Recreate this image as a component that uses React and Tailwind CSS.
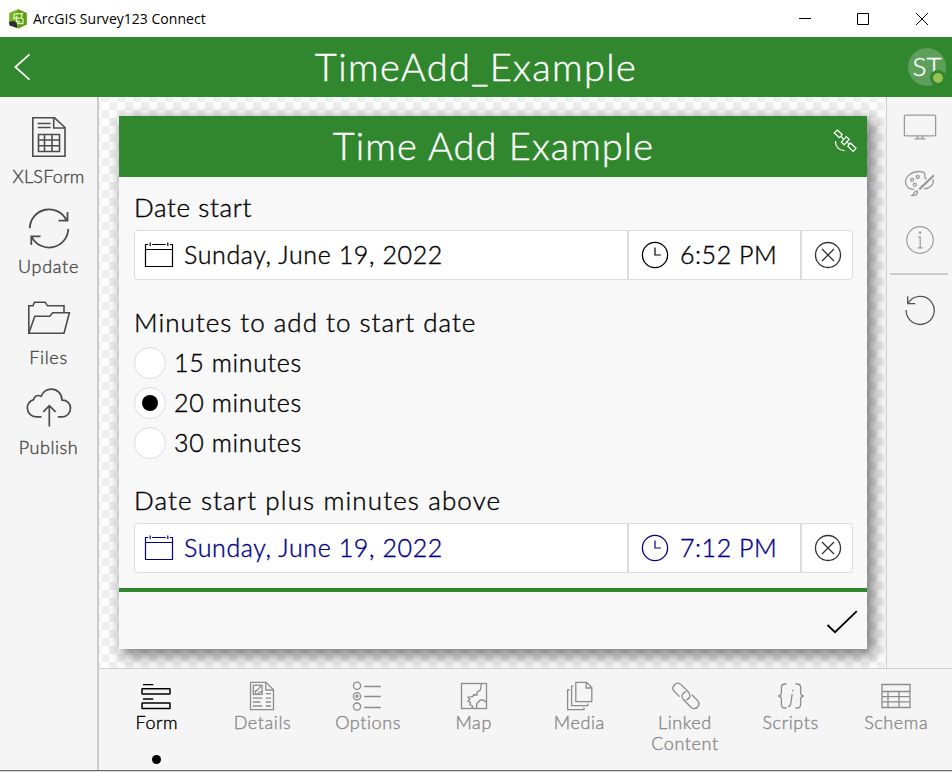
import { useState } from "react";

function XlsFormIcon() {
  return (
    <svg width="34" height="40" fill="none" stroke="currentColor" strokeWidth="1.6" className="mb-[2px]">
      <path d="M.8.8H22.5L33 10.5V39.2H.8Z" />
      <path d="M21.7.8V11H33M5.7 6.5H18.7M5.7 10.5H18.7" />
      <path d="M6.5 17.5H27.5V34.5H6.5ZM12.5 17.5V34.5M20 17.5V34.5M6.5 23H27.5M6.5 28.8H27.5" />
    </svg>
  );
}

function UpdateIcon() {
  return (
    <svg width="42" height="42" fill="none" stroke="currentColor" strokeWidth="1.8" className="mt-[2px]">
      <path d="M1.8 20.3A19.3 19.3 0 0 1 38.6 12.5M39.5 4V12.6H30.5" />
      <path d="M40.3 21A19.3 19.3 0 0 1 3.6 28.6M3.3 37V28.4H12.5" />
    </svg>
  );
}

function FilesIcon() {
  return (
    <svg width="44" height="34" fill="none" stroke="currentColor" strokeWidth="1.6">
      <path d="M1.8 32.2V4.8H6L7.4 1.2H18.2L20.4 4.8H37V12" />
      <path d="M1.8 32.2L7.8 15.2H22.8L25.6 11.8H42.4L37 32.2Z" />
    </svg>
  );
}

function PublishIcon() {
  return (
    <svg width="46" height="40" fill="none" stroke="currentColor" strokeWidth="1.7">
      <path d="M15.5 28.8H10.5A9 9 0 0 1 1.3 20C1.3 16 4 13 7.6 11.6C8 8.4 11.5 6.4 15.2 8.2C17.2 3.5 21 1.2 25.3 1.2C31.6 1.2 36 6 36 12.2C41 12 44.5 15.6 44.5 20C44.5 25 41 28.8 36.5 28.8H31.8" />
      <path d="M23.3 38.5V17.5M17.3 23.8L23.3 17.6L29.6 23.8" />
    </svg>
  );
}

function MonitorIcon() {
  return (
    <svg width="34" height="26" fill="none" stroke="currentColor" strokeWidth="1.3">
      <rect x="1.4" y="1.2" width="31.2" height="20.6" rx="1" />
      <path d="M14.5 22V24.6M19.5 22V24.6M11.5 24.8H22.5" />
    </svg>
  );
}

function PaletteIcon() {
  return (
    <svg width="32" height="28" fill="none" stroke="currentColor" strokeWidth="1.3">
      <path d="M10.2 19.3C5 19.5 1.5 16.5 1.5 12C1.5 6 8 1.5 15 1.5C19 1.5 21 2.6 20.8 5C20.6 7 20.8 8 22.2 9.3M29.2 9.5C30.5 14 26 18.5 20 18.8" />
      <circle cx="8.2" cy="9.8" r="1.5" />
      <circle cx="13.7" cy="7" r="1.5" />
      <circle cx="10.8" cy="14.8" r="1.5" />
      <path d="M15.2 19.4L30 5.2" strokeWidth="2.2" />
      <path d="M13 20.8C10 20.8 10 24.5 8 25.4C11 26.2 14.5 24.6 13 20.8Z" />
    </svg>
  );
}

function InfoIcon() {
  return (
    <svg width="30" height="30" fill="none" stroke="currentColor" strokeWidth="1.2">
      <circle cx="15" cy="15" r="13.3" />
      <path d="M12.8 12H15.2V22.8M12.8 22.8H17.6" />
      <circle cx="15" cy="7.6" r="1" fill="currentColor" strokeWidth=".6" />
    </svg>
  );
}

function UndoIcon() {
  return (
    <svg width="32" height="32" fill="none" stroke="currentColor" strokeWidth="1.3">
      <path d="M2.2 16A14 14 0 1 0 4.2 9.2M3.7 2.2V9.6H11.2" />
    </svg>
  );
}

function SatelliteIcon() {
  return (
    <svg width="24" height="24" fill="none" stroke="currentColor" strokeWidth="1.2">
      <path d="M4.3 1L9.2 5.6L6.4 8.6L1.2 4ZM17.5 14L23 19.3L20.2 22.4L14.8 17.2Z" />
      <path d="M13.3 7.6L16.2 10.2L11.2 15.8L8.4 13.2ZM7.8 7.3L10.4 10M14.2 13.2L16.2 15.4" />
      <path d="M2.4 12C2.4 17.6 6 21.5 11.5 21.6" />
    </svg>
  );
}

function CalendarIcon() {
  return (
    <svg width="30" height="26" fill="none" stroke="currentColor" strokeWidth="1.2">
      <path d="M4.2 2.5H1.5V24.5H28.5V2.5H25.8M8.2 2.5H21.8M1.5 7.5H28.5M6.2 .5V4M23.8 .5V4" />
    </svg>
  );
}

function ClockIcon() {
  return (
    <svg width="28" height="28" fill="none" stroke="currentColor" strokeWidth="1.3">
      <circle cx="14" cy="14" r="12.6" />
      <path d="M14 6.5V14H19.8" strokeWidth="1.2" />
    </svg>
  );
}

function ClearIcon() {
  return (
    <svg width="28" height="28" fill="none" stroke="currentColor" strokeWidth="1.3">
      <circle cx="14" cy="14" r="12.5" />
      <path d="M8 8L20 20M20 8L8 20" />
    </svg>
  );
}

function FormIcon() {
  return (
    <svg width="30" height="28" fill="none" stroke="currentColor" strokeWidth="1.5" className="mr-[2px]">
      <path d="M2 2.7H12.3M2 17H12.3" strokeWidth="1.3" />
      <rect x="1" y="6.7" width="28" height="5.4" rx=".5" />
      <rect x="1" y="21" width="28" height="5.6" rx=".5" />
    </svg>
  );
}

function DetailsIcon() {
  return (
    <svg width="26" height="30" fill="none" stroke="currentColor" strokeWidth="1.3">
      <path d="M1.5 1.3H17L24.5 8.8V28.7H1.5ZM16.8 1.3V9H24.5" />
      <rect x="4.3" y="4.2" width="8.8" height="9.2" />
      <path d="M11.5 5C11.8 8 8 7 8 9.5C5.5 9.5 6 11.5 7.4 13M9.5 13C9.5 10.8 11 10.5 13 11.2" />
      <path d="M16.8 12.7H22M3.8 17.2H13.2M16.8 17.2H22M3.8 21H11.5M16.8 21H22M3.8 25H13.2M16.8 25H22" />
    </svg>
  );
}

function OptionsIcon() {
  return (
    <svg width="30" height="30" fill="none" stroke="currentColor" strokeWidth="1.3" className="mr-[2px]">
      <circle cx="5" cy="4.8" r="3.6" />
      <circle cx="5" cy="15.2" r="3.6" />
      <circle cx="5" cy="15.2" r="1" fill="currentColor" />
      <circle cx="5" cy="25.6" r="3.6" />
      <path d="M12.2 5.5H28.8M12.2 15.5H28.8M12.2 26.5H28.8" />
    </svg>
  );
}

function MapIcon() {
  return (
    <svg width="28" height="28" fill="none" stroke="currentColor" strokeWidth="1.3">
      <rect x="1.5" y="1.5" width="25" height="25" />
      <path d="M21.5 1.5L20.3 8L17 10.2V13L13.5 12.8L12.8 14.6L8 15.2L9.8 17.4L8 19.2L10.5 20.6L9.8 22.5L12.8 24.5L12 26.5" />
      <path d="M16.5 26.5L16.8 21.5L20 18.2L23.3 18L26.5 20.5" />
    </svg>
  );
}

function MediaIcon() {
  return (
    <svg width="28" height="30" fill="none" stroke="currentColor" strokeWidth="1.3" className="ml-[2px]">
      <path d="M9.8 1.4H20.5L25.8 6.6V20.6H9.8ZM20.2 1.4V7H25.8" />
      <path d="M7.5 5.2H5.6V24.6H21.8V22.6M3.6 9H1.6V28.6H18V26.6" />
    </svg>
  );
}

function LinkIcon() {
  return (
    <svg width="30" height="30" fill="none" stroke="currentColor" strokeWidth="1.3" className="ml-[2px]">
      <path d="M8.6 15.6L3.2 10.2C-.6 6 5.4-.4 9.8 3.4L17.2 10.8C20.4 14.2 18.6 18.4 14.8 18.8" />
      <path d="M20.8 13.8L26.6 19.6C30.4 24 24.6 30 20.2 26.4L12.8 19C9.6 15.4 11.2 11.2 15.4 10.9" />
    </svg>
  );
}

function ScriptsIcon() {
  return (
    <svg width="28" height="28" fill="none" stroke="currentColor" strokeWidth="1.3">
      <path d="M9.5 2H8C5.5 2 4.4 3.2 4.4 5.5V10.2C4.4 12.4 3.5 13.8 1.2 14C3.5 14.2 4.4 15.6 4.4 17.8V22.5C4.4 24.8 5.5 26 8 26H9.5" />
      <path d="M18.5 2H20C22.5 2 23.6 3.2 23.6 5.5V10.2C23.6 12.4 24.5 13.8 26.8 14C24.5 14.2 23.6 15.6 23.6 17.8V22.5C23.6 24.8 22.5 26 20 26H18.5" />
      <path d="M15.2 12L13.8 21.4C13.5 23.6 12.9 24.5 11.2 24.5M15.8 7.8V9.2" />
    </svg>
  );
}

function SchemaIcon() {
  return (
    <svg width="30" height="26" fill="none" stroke="currentColor" strokeWidth="1.3">
      <path d="M1 1.5H29V24.5H1ZM1 8.5H29M1 13.6H29M1 18.8H29M7 8.5V24.5M18 8.5V24.5" />
    </svg>
  );
}

const tools = [
  { label: "XLSForm", Icon: XlsFormIcon, spacing: "tracking-[0.25px]" },
  { label: "Update", Icon: UpdateIcon, spacing: "tracking-[0.7px]" },
  { label: "Files", Icon: FilesIcon, spacing: "tracking-[0.7px]" },
  { label: "Publish", Icon: PublishIcon, spacing: "tracking-[0.55px]" },
];

const tabs = [
  { label: "Form", Icon: FormIcon },
  { label: "Details", Icon: DetailsIcon },
  { label: "Options", Icon: OptionsIcon },
  { label: "Map", Icon: MapIcon },
  { label: "Media", Icon: MediaIcon },
  { label: "Linked Content", Icon: LinkIcon },
  { label: "Scripts", Icon: ScriptsIcon },
  { label: "Schema", Icon: SchemaIcon },
];

const choices = ["15 minutes", "20 minutes", "30 minutes"];

function AppLogo() {
  return (
    <svg width="20" height="20" viewBox="0 0 20 20">
      <path d="M10 .3L18.6 4V15.6L10 19.6L1.2 15.6V4Z" fill="#76b522" />
      <path d="M10 .3L18.6 4V15.6L10 19.6Z" fill="#5c9c16" />
      <path d="M6 5.2L14.5 4.5L13.2 9L15 10V14.5H9M6 5.2V9.5L12.5 9.2M8.5 7V12.5H12" fill="none" stroke="#d9f0b8" strokeWidth="1.3" />
      <path d="M1 12.8L6.5 12L9 14.5V19L1.5 16.5Z" fill="#2b2b33" />
    </svg>
  );
}

function DateTimeRow({ date, time, color }) {
  return (
    <div className={`flex h-[50px] rounded border border-[#dcdce0] bg-white ${color}`}>
      <div className="flex w-[492px] items-center pl-[9px]">
        <CalendarIcon />
        <span className="ml-[10px] whitespace-nowrap text-[25px] tracking-[0.62px]">{date}</span>
      </div>
      <div className="flex w-[175px] items-center border-x-2 border-[#dcdce0] pl-3">
        <ClockIcon />
        <span className="ml-[11px] whitespace-nowrap text-[25px] tracking-[0.55px]">{time}</span>
      </div>
      <button className="flex flex-1 items-center justify-center pl-[2px] text-[#333]">
        <ClearIcon />
      </button>
    </div>
  );
}

export default function App() {
  const [minutes, setMinutes] = useState("20 minutes");
  const [tab, setTab] = useState("Form");

  return (
    <div className="flex h-[772px] w-[952px] flex-col overflow-hidden bg-[#f5f5f5] font-['Lato',sans-serif] font-light [-webkit-text-stroke:0.4px]">
      {/* window title bar */}
      <div className="flex h-[37px] shrink-0 items-center bg-white pl-2 font-normal text-black [-webkit-text-stroke:0px]">
        <AppLogo />
        <span className="ml-[5px] font-['Open_Sans',sans-serif] text-[14px] tracking-[0.02px]">ArcGIS Survey123 Connect</span>
        <div className="ml-auto flex items-center gap-[46px] pr-6">
          <svg width="12" height="12" stroke="currentColor"><path d="M0 5.5H12" /></svg>
          <svg width="12" height="12" fill="none" stroke="currentColor" className="mr-px"><path d="M.5.5H11.5V11.5H.5Z" /></svg>
          <svg width="12" height="12" stroke="currentColor"><path d="M0 0L12 12M12 0L0 12" /></svg>
        </div>
      </div>

      <header className="flex h-[60px] shrink-0 items-center bg-[#31872e] text-white">
        <button className="w-[60px] pl-[14px]">
          <svg width="17" height="28" fill="none" stroke="currentColor" strokeWidth="1.7"><path d="M15.5 1.3L1.3 14L15.5 26.7" /></svg>
        </button>
        <h1 className="flex-1 pb-[2px] text-center text-[38px] leading-none tracking-[1.35px]">TimeAdd_Example</h1>
        <div className="flex w-[60px] justify-end pr-[6px]">
          <div className="relative flex h-[38px] w-[38px] items-center justify-center rounded-full bg-[#5da05b] pb-px text-[26px]">
            ST
            <span className="absolute bottom-0 right-0 h-4 w-4 rounded-full border-[3px] border-[#31872e] bg-[#99bf55]" />
          </div>
        </div>
      </header>

      <div className="flex min-h-0 flex-1">
        <aside className="flex w-[99px] shrink-0 flex-col border-r-2 border-[#cbcbcb] pt-[18px] text-[#4c4c4c]">
          {tools.map(({ label, Icon, spacing }) => (
            <button key={label} className="flex h-[90.3px] flex-col items-center">
              <span className="flex h-[45px] items-center"><Icon /></span>
              <span className={`mt-[4px] text-[18px] leading-6 ${spacing}`}>{label}</span>
            </button>
          ))}
        </aside>

        <div className="flex min-w-0 flex-1 flex-col">
          <div className="flex h-[571px]">
            <main className="w-[787px] overflow-hidden bg-white bg-[conic-gradient(#f0f0f0_25%,#fff_0_50%,#f0f0f0_0_75%,#fff_0)] bg-[length:16px_16px] bg-[position:2px_5px] pl-[20px] pt-[19px]">
              <div className="h-[533px] w-[748px] bg-[#f8f8f9] shadow-[5px_5px_14px_2px_rgba(0,0,0,0.5)]">
                <div className="flex h-[61px] items-center bg-[#31872e] text-white">
                  <h2 className="flex-1 pb-1 pl-[35px] text-center text-[38px] leading-none tracking-[1.05px]">Time Add Example</h2>
                  <span className="mr-[10px] w-[24px] pb-3"><SatelliteIcon /></span>
                </div>

                <div className="h-[411px] pl-[15px] pr-[14px] text-black">
                  <p className="flex h-[53px] items-end pb-[3px] text-[26px] tracking-[0.6px]">Date start</p>
                  <DateTimeRow date="Sunday, June 19, 2022" time="6:52 PM" color="text-black" />

                  <p className="mt-[24px] h-[39px] text-[26px] leading-9 tracking-[1px]">Minutes to add to start date</p>
                  {choices.map((choice) => (
                    <button key={choice} onClick={() => setMinutes(choice)} className="flex h-10 items-center text-[25px] tracking-[0.65px]">
                      <span className="mr-2 flex h-8 w-8 items-center justify-center rounded-full border border-[#dcdce0] bg-white">
                        {minutes === choice && <span className="h-4 w-4 rounded-full bg-black" />}
                      </span>
                      {choice}
                    </button>
                  ))}

                  <p className="mt-[19px] h-[41px] text-[26px] leading-9 tracking-[1.12px]">Date start plus minutes above</p>
                  <DateTimeRow date="Sunday, June 19, 2022" time="7:12 PM" color="text-[#00008b]" />
                </div>

                <div className="flex h-[61px] items-center justify-end border-t-4 border-[#31872e] pr-[9px] pt-[3px] text-black">
                  <svg width="32" height="24" fill="none" stroke="currentColor" strokeWidth="1.8"><path d="M1.5 15L9 22.2L30.8 1.2" /></svg>
                </div>
              </div>
            </main>

            <aside className="flex flex-1 flex-col items-center border-l border-[#cfcfcf] pt-[17px] text-[#9a9a9a]">
              <button><MonitorIcon /></button>
              <button className="mt-[30px]"><PaletteIcon /></button>
              <button className="mt-[27px]"><InfoIcon /></button>
              <div className="mr-[2px] mt-[18px] h-[2px] w-[58px] bg-[#cbcbcb]" />
              <button className="mt-[19px] text-[#555]"><UndoIcon /></button>
            </aside>
          </div>

          <nav className="flex h-[102px] border-t border-[#cfcfcf] pl-[5px] pr-[3px] pt-[11px]">
            {tabs.map(({ label, Icon }) => (
              <button
                key={label}
                onClick={() => setTab(label)}
                className={`flex flex-1 flex-col items-center ${tab === label ? "text-black" : "text-[#8c8c8c]"}`}
              >
                <span className="flex h-[32px] items-center"><Icon /></span>
                <span className="w-[80px] text-center text-[18px] leading-[21px] tracking-[0.6px]">{label}</span>
                {tab === label && <span className="mt-[22px] h-[9px] w-[9px] rounded-full bg-black" />}
              </button>
            ))}
          </nav>
        </div>
      </div>
      <div className="h-[2px] shrink-0 border-t border-[#6f6a70] bg-[#d8d8d8]" />
    </div>
  );
}
